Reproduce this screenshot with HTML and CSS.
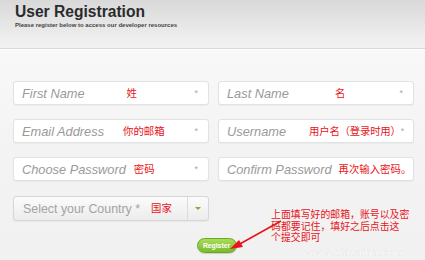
FILE: index.html
```html
<!doctype html>
<html lang="zh-CN">
  <head>
    <meta charset="UTF-8" />
    <title>User Registration</title>
    <link rel="stylesheet" href="styles.css">
  </head>
  <body>
    <div class="page">
      <div class="header">
        <h1>User Registration</h1>
        <p>Please register below to access our developer resources</p>
      </div>
      <div class="main">
        <div class="grid">
          <div class="field">
            <span class="ph">First Name</span>
            <span class="note n-first">姓</span>
            <span class="req">*</span>
          </div>
          <div class="field">
            <span class="ph">Last Name</span>
            <span class="note n-last">名</span>
            <span class="req">*</span>
          </div>
          <div class="field">
            <span class="ph">Email Address</span>
            <span class="note n-email">你的邮箱</span>
            <span class="req">*</span>
          </div>
          <div class="field">
            <span class="ph">Username</span>
            <span class="note n-user">用户名（登录时用）</span>
            <span class="req tight">*</span>
          </div>
          <div class="field">
            <span class="ph">Choose Password</span>
            <span class="note n-pass">密码</span>
            <span class="req">*</span>
          </div>
          <div class="field">
            <span class="ph">Confirm Password</span>
            <span class="note n-confirm">再次输入密码。</span>
          </div>
          <div class="select">
            <div class="select-label">
              <span class="sel-text">Select your Country *</span>
              <span class="note n-country">国家</span>
            </div>
            <div class="select-btn"><span class="caret"></span></div>
          </div>
        </div>
        <div class="actions">
          <button class="register">Register</button>
        </div>
      </div>

      <span class="wm-url">www.xiazaiba.com</span>
      <div class="callout">上面填写好的邮箱，账号以及密<br>码都要记住，填好之后点击这<br>个提交即可</div>
      <svg class="arrow" width="60" height="40" viewBox="0 0 60 40">
        <line x1="55" y1="5" x2="12" y2="29" stroke="#e8141a" stroke-width="1.6" />
        <polygon points="4,33 13,24 17,31" fill="#e8141a" />
      </svg>
    </div>
  </body>
</html>
```

FILE: styles.css
```css
* {
  box-sizing: border-box;
}

body {
  margin: 0;
  padding: 0;
  font-family: "Liberation Sans", Arial, sans-serif;
  background-color: #f4f4f4;
  width: 425px;
  height: 260px;
  overflow: hidden;
}

.page {
  position: relative;
  height: 260px;
  background: linear-gradient(#fbfbfb, #f3f3f3 60%, #f1f1f1);
}

.header {
  height: 49px;
  padding: 4px 15px 0;
  background: linear-gradient(#d9d9d9, #eeeeee 80%, #f1f1f1);
  border-bottom: 1px solid #d9d9d9;
}
.header h1 {
  margin: 0;
  font-size: 15.6px;
  line-height: 16px;
  font-weight: bold;
  color: #2b2b2b;
}
.header p {
  margin: 2px 0 0;
  font-size: 6px;
  font-weight: bold;
  color: #444;
}

.main {
  padding: 31px 11px 0 13px;
  border-top: 1px solid #fdfdfd;
}

.grid {
  display: grid;
  grid-template-columns: 196px 196px;
  column-gap: 9px;
  row-gap: 14px;
}

.field {
  height: 24px;
  display: flex;
  align-items: center;
  padding: 0 0 0 8px;
  background-color: #fff;
  border: 1px solid #e2e2e2;
  border-radius: 3px;
  box-shadow: 0 1px 1px rgba(0, 0, 0, 0.04);
}
.ph {
  font-size: 12.8px;
  font-style: italic;
  color: #9a9a9a;
  white-space: nowrap;
}
.req {
  margin-left: auto;
  padding-right: 10px;
  font-size: 9px;
  color: #aaa;
}
.req.tight {
  margin-left: 0;
  padding-right: 0;
}

.note {
  font-family: "Noto Sans CJK SC", sans-serif;
  font-size: 10.4px;
  color: #e8141a;
  white-space: nowrap;
  line-height: 1;
}
.n-first { margin-left: 42px; }
.n-last { margin-left: 46px; }
.n-email { margin-left: 19px; }
.n-user { margin-left: 23px; letter-spacing: -0.2px; }
.n-pass { margin-left: 8px; }
.n-confirm { margin-left: 7px; }
.n-country { margin-left: 11px; }

.select {
  grid-column: 1;
  margin-top: 1px;
  height: 25px;
  display: flex;
  border: 1px solid #d6d6d6;
  border-radius: 3px;
  background: linear-gradient(#fbfbfb, #ececec);
  box-shadow: 0 1px 1px rgba(0, 0, 0, 0.05);
}
.select-label {
  flex: 1;
  display: flex;
  align-items: center;
  padding-left: 9px;
}
.sel-text {
  font-size: 12.4px;
  color: #a3a3a3;
}
.select-btn {
  width: 21px;
  border-left: 1px solid #dcdcdc;
  display: flex;
  align-items: center;
  justify-content: center;
}
.caret {
  width: 0;
  height: 0;
  border-left: 3px solid transparent;
  border-right: 3px solid transparent;
  border-top: 3px solid #7bb32c;
}

.actions {
  display: flex;
  justify-content: center;
  padding: 17px 0 0 6px;
}
.register {
  width: 40px;
  height: 15px;
  padding: 0;
  border: 1px solid #6aa823;
  border-radius: 8px;
  background: linear-gradient(#a9dc5a, #79bb2b);
  color: #fff;
  font-family: "Liberation Sans", Arial, sans-serif;
  font-size: 6.8px;
  font-weight: bold;
  box-shadow: 0 1px 1px rgba(0, 0, 0, 0.15);
}

.wm-url {
  position: absolute;
  left: 304px;
  top: 246px;
  font-size: 11.5px;
  line-height: 12px;
  font-weight: bold;
  color: rgba(255, 255, 255, 0.5);
  -webkit-text-stroke: 0.5px rgba(0, 0, 0, 0.08);
}

.callout {
  position: absolute;
  left: 271px;
  top: 209px;
  font-family: "Noto Sans CJK SC", sans-serif;
  font-size: 9.9px;
  line-height: 11.6px;
  color: #e8141a;
  white-space: nowrap;
}

.arrow {
  position: absolute;
  left: 226px;
  top: 216px;
}
```
